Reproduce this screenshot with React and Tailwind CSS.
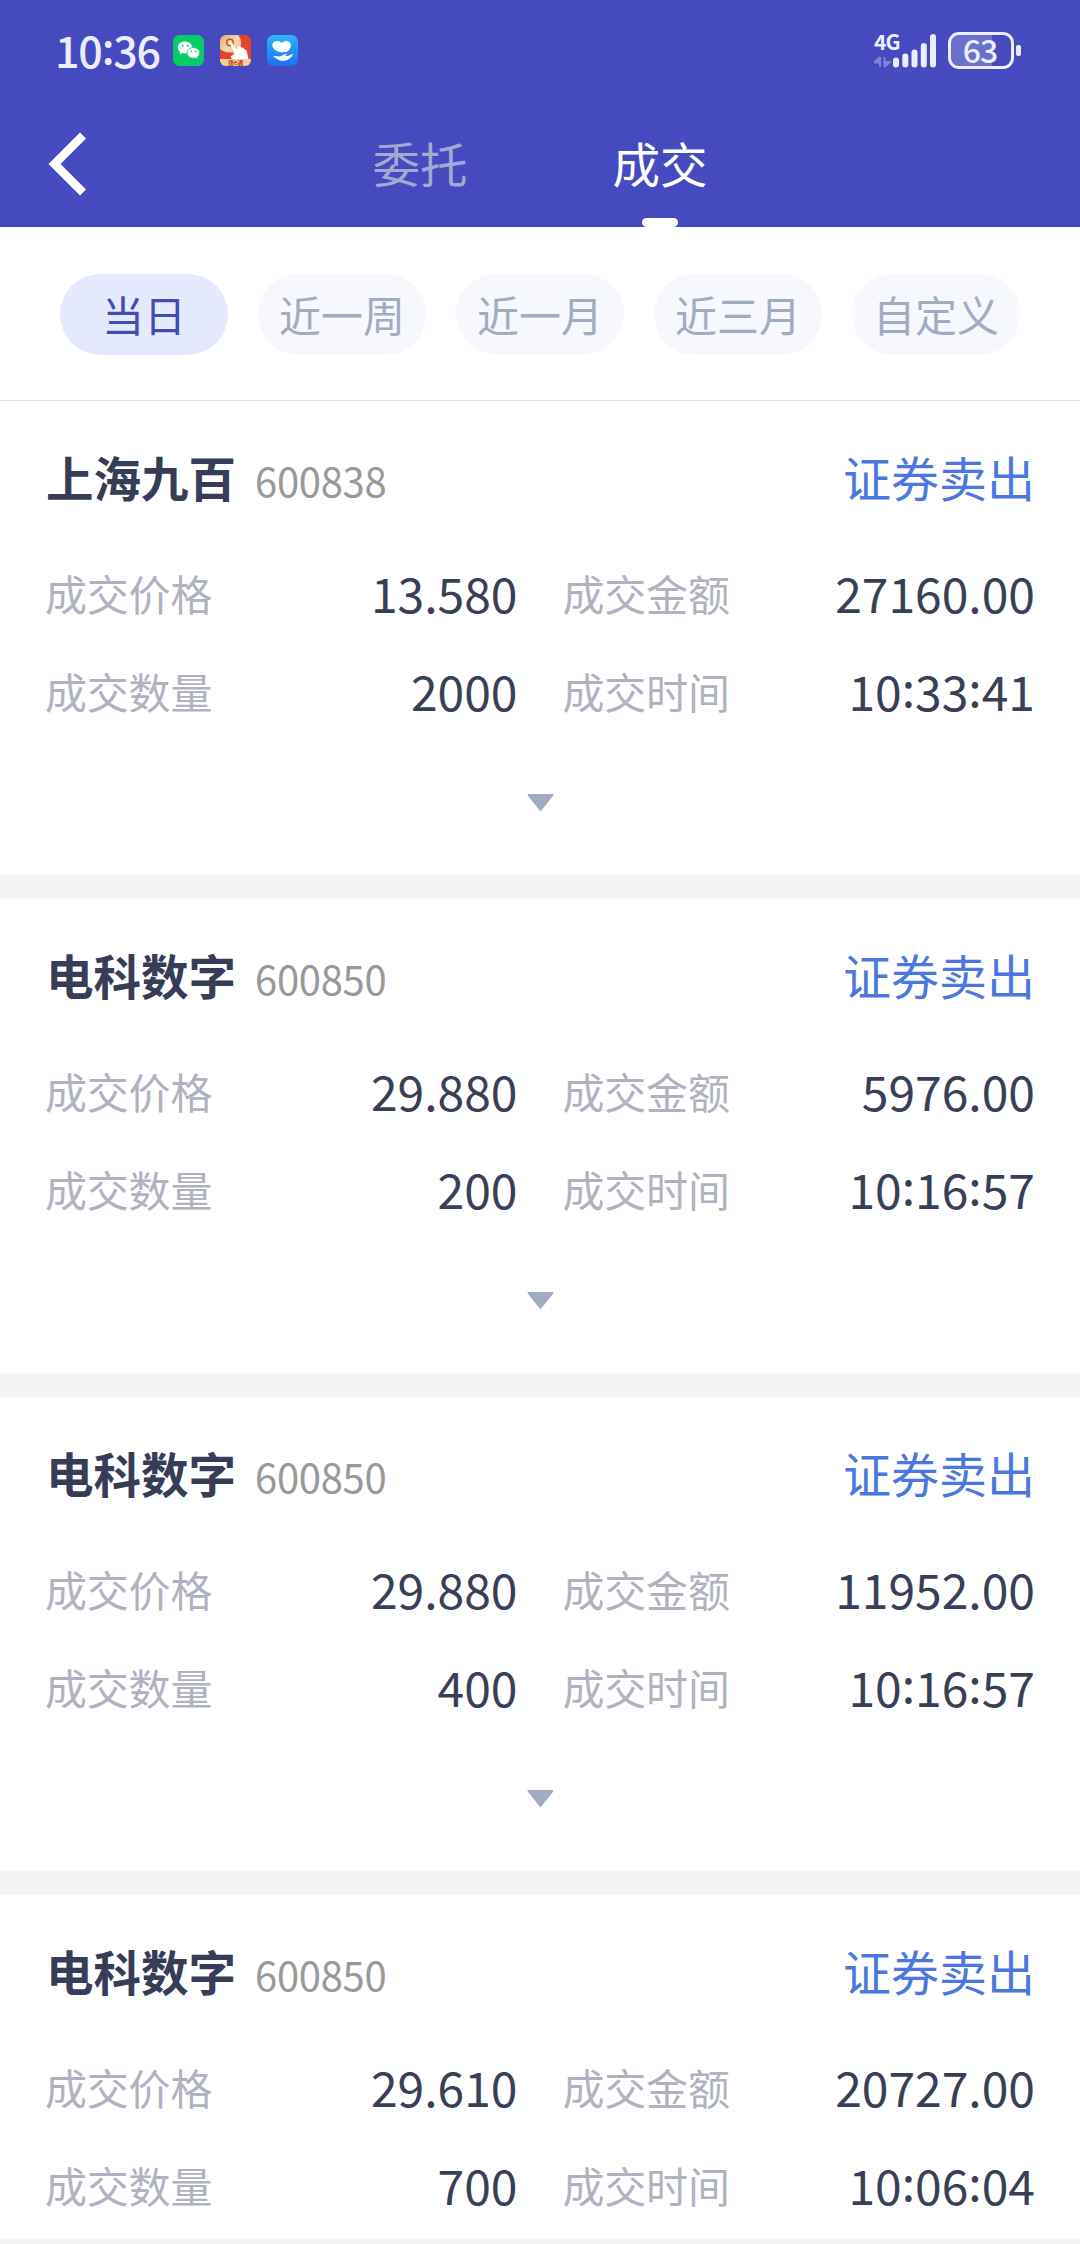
const trades = [
  { name: "上海九百", code: "600838", price: "13.580", amount: "27160.00", qty: "2000", time: "10:33:41" },
  { name: "电科数字", code: "600850", price: "29.880", amount: "5976.00", qty: "200", time: "10:16:57" },
  { name: "电科数字", code: "600850", price: "29.880", amount: "11952.00", qty: "400", time: "10:16:57" },
  { name: "电科数字", code: "600850", price: "29.610", amount: "20727.00", qty: "700", time: "10:06:04" },
];

const ranges = ["当日", "近一周", "近一月", "近三月", "自定义"];

function WeChatIcon() {
  return (
    <svg className="size-[31px]" viewBox="0 0 31 31">
      <rect width="31" height="31" rx="6.5" fill="#07cd68" />
      <path d="M12 6.5c-4.200 0-7.300 2.700-7.300 6 0 1.900 1 3.500 2.600 4.600l-.6 2.300 2.600-1.400c.9.200 1.800.4 2.700.4 4.100 0 7.300-2.700 7.300-5.900s-3.200-6-7.300-6z" fill="#fff" />
      <path d="M20.400 12.500c-3.800 0-6.400 2.500-6.400 5.400s2.700 5.400 6.400 5.400c.8 0 1.500-.1 2.200-.3l2.300 1.300-.5-2.200c1.500-1 2.400-2.500 2.400-4.200 0-2.900-2.700-5.400-6.400-5.400z" fill="#fff" stroke="#07cd68" strokeWidth=".9" />
      <g fill="#07cd68">
        <circle cx="9.700" cy="10.800" r="1" />
        <circle cx="14.600" cy="10.800" r="1" />
        <circle cx="18.400" cy="16.300" r=".9" />
        <circle cx="22.600" cy="16.300" r=".9" />
      </g>
    </svg>
  );
}

function BrokerIcon() {
  return (
    <span className="relative block size-[31px] overflow-hidden rounded-[6px] bg-[#e5432f]">
      <svg className="size-[31px]" viewBox="0 0 31 31">
        <defs>
          <linearGradient id="gold" x1="0" y1="0" x2="1" y2="1">
            <stop offset="0" stopColor="#c99a55" />
            <stop offset=".6" stopColor="#f3dcae" />
            <stop offset="1" stopColor="#e2b878" />
          </linearGradient>
        </defs>
        <circle cx="8" cy="8" r="13" fill="url(#gold)" />
        <path d="M0 14c4 3 9 4.500 13 3v8H0z" fill="#e5432f" />
        <circle cx="10" cy="7.500" r="3.300" fill="none" stroke="#d9492f" strokeWidth="1.500" />
        <path d="M9.300 7.200c.8-.8 1.800-.5 2.400.4l5 7 1.400-3.400c.5-.8 1.600-.4 2.200 0l6.300 4.300 2 9H12l-1.200-3.600 4.400-1.600z" fill="#fff" />
        <path d="M0 24h31v7H0z" fill="#f0d3a0" />
      </svg>
      <span className="absolute inset-x-0 bottom-0 text-center text-[6px] leading-[7px] font-bold text-[#c8371f]">涨e通</span>
    </span>
  );
}

function CareIcon() {
  return (
    <svg className="size-[31px]" viewBox="0 0 31 31">
      <defs>
        <linearGradient id="care" x1="0" y1="0" x2="0" y2="1">
          <stop offset="0" stopColor="#2bb6fb" />
          <stop offset="1" stopColor="#1f6df2" />
        </linearGradient>
      </defs>
      <rect width="31" height="31" rx="6.500" fill="url(#care)" />
      <path d="M14.800 17.500C9.500 16.500 5.300 14 5.300 10.300c0-4.600 6.300-5.800 9.300-2.200 3-3.600 9.300-2.400 9.300 2.200 0 3-1.800 5.300-4.300 6.700-1.700 0-3 .1-4.800.5z" fill="#fff" />
      <path d="M6 21.200c2.700-.8 4.200.2 6 .2 2.800 0 4.700-2.600 8-2.700-.2 1.300-1.300 1.900-2.700 2.300 3.200.4 6-.8 9-2.500-1.500 4.500-5.700 7.300-10.300 7.300-4.500 0-6.500-2.600-10-4.600z" fill="#fff" />
    </svg>
  );
}

// Digits with each colon raised to the middle of the figure height.
function Figures({ text }) {
  return text.split(/(:)/).map((part, i) =>
    part === ":" ? (
      <span key={i} className="relative -top-[0.09em]">:</span>
    ) : (
      part
    ),
  );
}

function StatusBar() {
  return (
    <div className="flex h-[101px] items-center justify-between pr-[59px] pl-[55px]">
      <div className="flex items-center gap-4">
        <span className="w-[102px] pb-[3px] text-[43px] leading-[44px] font-medium tracking-[-1.2px] whitespace-nowrap text-[#ecebff]">
          <Figures text="10:36" />
        </span>
        <WeChatIcon />
        <BrokerIcon />
        <CareIcon />
      </div>
      <div className="flex items-center">
        <div className="relative h-[36px] w-[64px]">
          <span className="absolute -top-[2px] left-0 text-[21px] leading-[20px] font-bold tracking-[-0.8px] text-[#ecebff]">4G</span>
          <svg className="size-full" viewBox="0 0 64 36">
            <path d="M6 24v10M6 24l-5.500 5.500H6M10.500 34V24M10.500 34l5-5h-5" fill="#7f83d8" stroke="#7f83d8" strokeWidth="2" />
            <g fill="#ecebff">
              <rect x="19" y="24.500" width="6" height="10" rx="3" />
              <rect x="28.300" y="20.500" width="6" height="14" rx="3" />
              <rect x="37.500" y="16.500" width="6" height="18" rx="3" />
              <rect x="46.800" y="10" width="6" height="24.500" rx="3" />
              <rect x="56" y="1" width="6" height="33.500" rx="3" />
            </g>
          </svg>
        </div>
        <div className="ml-2.5 flex h-[37px] w-[66px] items-center justify-center rounded-[11px] border-[3px] border-[#ecebff] bg-linear-to-r from-[#6b70cb] from-68% to-transparent to-68% pr-0.5 pb-[3px] text-[32px] leading-[31px] font-medium tracking-[-1px] text-[#ecebff]">
          63
        </div>
        <div className="ml-0.5 h-[11px] w-[5px] rounded-[2px] bg-[#ecebff]" />
      </div>
    </div>
  );
}

function Field({ label, value }) {
  return (
    <div className="flex h-[98px] items-center justify-between">
      <span className="pb-0.5 text-[42px] leading-[60px] tracking-[-0.2px] text-[#b0b3bf]">{label}</span>
      <span className="pb-[4px] text-[48px] leading-[60px] text-[#393f56]">
        <Figures text={value} />
      </span>
    </div>
  );
}

function TradeCard({ trade }) {
  return (
    <section className="h-[474px] shrink-0 bg-white px-[45px] pt-[43px]">
      <div className="flex h-[66px] items-center justify-between">
        <div className="flex items-baseline gap-[19px] pl-px">
          <h2 className="text-[47.5px] leading-[66px] font-bold text-[#373d57]">{trade.name}</h2>
          <span className="text-[40px] leading-[60px] tracking-[-0.3px] text-[#999999]">{trade.code}</span>
        </div>
        <span className="pb-0.5 text-[48px] leading-[66px] text-[#4a78e0]">证券卖出</span>
      </div>
      <div className="mt-[35px] grid grid-cols-2 gap-x-[45px]">
        <Field label="成交价格" value={trade.price} />
        <Field label="成交金额" value={trade.amount} />
        <Field label="成交数量" value={trade.qty} />
        <Field label="成交时间" value={trade.time} />
      </div>
      <div className="mt-[53px] flex justify-center">
        <svg className="h-[17px] w-[27px]" viewBox="0 0 27 17">
          <path d="M1.500 1h24L13.500 16z" fill="#a2acc0" stroke="#a2acc0" strokeWidth="2" strokeLinejoin="round" />
        </svg>
      </div>
    </section>
  );
}

export default function App() {
  return (
    <div className="relative flex h-[2244px] w-[1080px] flex-col overflow-hidden bg-[#f3f4f6] font-['Noto_Sans_CJK_SC',sans-serif]">
      <header className="h-[227px] shrink-0 bg-[#454bbf]">
        <StatusBar />
        <nav className="relative flex h-[126px] items-center justify-center gap-[144px] text-[47.5px]">
          <svg className="absolute top-[31px] left-[48px] h-[64px] w-[40px]" viewBox="0 0 40 64">
            <path d="M35 3.500 6.500 32 35 60.500" fill="none" stroke="#fff" strokeWidth="8.500" />
          </svg>
          <button className="w-24 pb-0.5 leading-[124px] text-[#a3a9d2]">委托</button>
          <button className="relative w-24 pb-0.5 leading-[124px] text-white">
            成交
            <span className="absolute bottom-0 left-[30px] h-[9px] w-9 rounded-[4.500px] bg-white" />
          </button>
        </nav>
      </header>
      <div className="flex h-[174px] shrink-0 items-start justify-center gap-[30px] border-b border-[#e2e3e6] bg-white pt-[47px]">
        {ranges.map((range, i) => (
          <button
            key={range}
            className={
              i === 0
                ? "h-[81px] w-[168px] rounded-full bg-[#e5e9fe] pb-0.5 text-[42px] leading-[79px] text-[#454bb0]"
                : "h-[81px] w-[168px] rounded-full bg-[#f6f8fd] pb-0.5 text-[42px] leading-[79px] text-[#a2acc0]"
            }
          >
            {range}
          </button>
        ))}
      </div>
      <main className="flex flex-col gap-6">
        {trades.map((trade) => (
          <TradeCard key={trade.name + trade.amount} trade={trade} />
        ))}
      </main>
      <div className="absolute inset-x-0 bottom-0 h-[5px] bg-[#f3f4f6]" />
    </div>
  );
}
